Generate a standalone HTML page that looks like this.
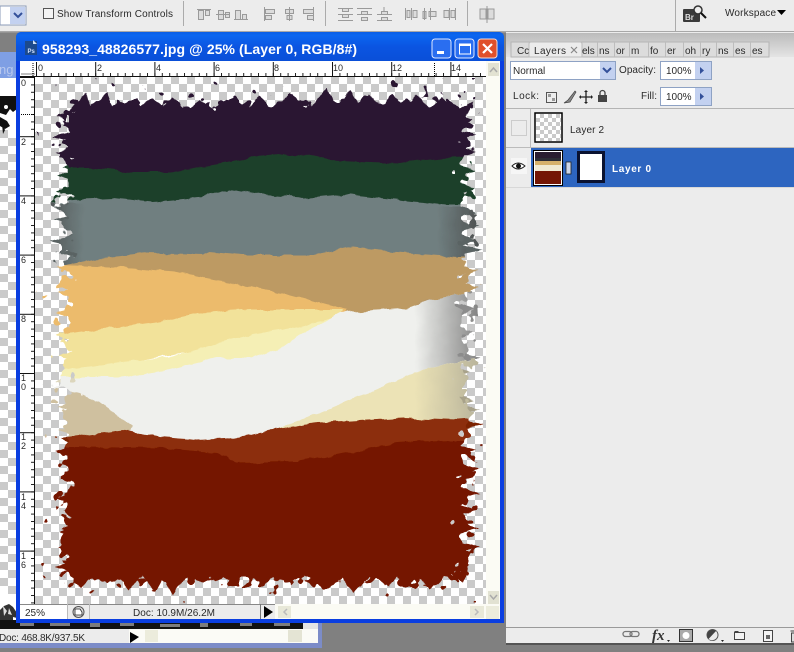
<!DOCTYPE html>
<html><head><meta charset="utf-8"><style>
html,body{margin:0;padding:0;background:#808080;width:794px;height:652px;overflow:hidden}
svg{display:block}
text{font-family:"Liberation Sans",sans-serif;font-size:10px;fill:#2a2a2a}
</style></head><body>
<svg width="794" height="652" viewBox="0 0 794 652" xmlns="http://www.w3.org/2000/svg">
<defs>
<pattern id="chk" x="35" y="68" width="16" height="16" patternUnits="userSpaceOnUse"><rect width="16" height="16" fill="#fff"/><rect x="8" y="8" width="8" height="8" fill="#cacaca"/><rect x="0" y="0" width="8" height="8" fill="#cacaca"/></pattern>
<pattern id="chkS" x="536" y="114" width="8" height="8" patternUnits="userSpaceOnUse"><rect width="8" height="8" fill="#fff"/><rect x="4" y="0" width="4" height="4" fill="#cacaca"/><rect x="0" y="4" width="4" height="4" fill="#cacaca"/></pattern>
<pattern id="tickH" x="36" y="0" width="7.4" height="10" patternUnits="userSpaceOnUse"><rect width="1" height="10" fill="#222"/></pattern>
<pattern id="tickHM" x="36" y="0" width="59.2" height="10" patternUnits="userSpaceOnUse"><rect width="1" height="10" fill="#111"/></pattern>
<pattern id="tickV" x="0" y="77" width="10" height="7.4" patternUnits="userSpaceOnUse"><rect width="10" height="1" fill="#222"/></pattern>
<pattern id="tickVM" x="0" y="77" width="10" height="59.2" patternUnits="userSpaceOnUse"><rect width="10" height="1" fill="#111"/></pattern>
<linearGradient id="title" x1="0" y1="0" x2="0" y2="1"><stop offset="0" stop-color="#0a5ee6"/><stop offset=".12" stop-color="#0b66f0"/><stop offset=".5" stop-color="#0b55e2"/><stop offset="1" stop-color="#0a4fd8"/></linearGradient>
<linearGradient id="tabs" x1="0" y1="0" x2="0" y2="1"><stop offset="0" stop-color="#bdbdbd"/><stop offset="1" stop-color="#e4e4e4"/></linearGradient>
<linearGradient id="fadeL" x1="0" y1="0" x2="1" y2="0"><stop offset="0" stop-color="#444" stop-opacity=".9"/><stop offset="1" stop-color="#444" stop-opacity="0"/></linearGradient>
<linearGradient id="fadeR" x1="0" y1="0" x2="1" y2="0"><stop offset="0" stop-color="#444" stop-opacity="0"/><stop offset="1" stop-color="#444" stop-opacity=".9"/></linearGradient>
<linearGradient id="fadeW" gradientUnits="userSpaceOnUse" x1="415" y1="0" x2="480" y2="0"><stop offset="0" stop-color="#777" stop-opacity="0"/><stop offset="1" stop-color="#777" stop-opacity=".9"/></linearGradient>
<filter id="rag" filterUnits="userSpaceOnUse" x="36" y="78" width="450" height="526" color-interpolation-filters="sRGB">
<feGaussianBlur in="SourceAlpha" stdDeviation="11" result="b"/>
<feTurbulence type="fractalNoise" baseFrequency=".1" numOctaves="2" seed="7" result="n"/>
<feColorMatrix in="n" type="matrix" values="0 0 0 0 0 0 0 0 0 0 0 0 0 0 0 1.5 0 0 0 -0.25" result="na"/>
<feComposite in="b" in2="na" operator="arithmetic" k1="0" k2="1" k3="1" k4="-0.9" result="s"/>
<feComponentTransfer in="s" result="t"><feFuncA type="linear" slope="30" intercept="0"/></feComponentTransfer>
<feFlood flood-color="#fff"/><feComposite in2="t" operator="in"/>
</filter>
<filter id="rag2" filterUnits="userSpaceOnUse" x="36" y="78" width="450" height="526" color-interpolation-filters="sRGB">
<feGaussianBlur in="SourceAlpha" stdDeviation="6" result="b"/>
<feTurbulence type="fractalNoise" baseFrequency=".06" numOctaves="2" seed="3" result="n"/>
<feColorMatrix in="n" type="matrix" values="0 0 0 0 0 0 0 0 0 0 0 0 0 0 0 1 0 0 0 0" result="na"/>
<feComposite in="b" in2="na" operator="arithmetic" k1="0" k2="1" k3="1" k4="-1" result="s"/>
<feComponentTransfer in="s" result="t"><feFuncA type="linear" slope="30" intercept="0"/></feComponentTransfer>
<feFlood flood-color="#fff"/><feComposite in2="t" operator="in"/>
</filter>
<filter id="rough" filterUnits="userSpaceOnUse" x="20" y="60" width="480" height="560"><feTurbulence type="fractalNoise" baseFrequency=".06" numOctaves="3" seed="2"/><feDisplacementMap in="SourceGraphic" scale="6" xChannelSelector="R" yChannelSelector="G"/></filter>
<mask id="artMask" maskUnits="userSpaceOnUse" x="36" y="78" width="450" height="526"><rect x="68" y="106" width="395" height="472" fill="#fff" filter="url(#rag)"/></mask>
</defs>

<!-- workspace -->
<rect width="794" height="652" fill="#808080"/>

<!-- back document -->
<rect x="0" y="52" width="17" height="26" fill="#7f9fe4"/>
<text x="-1" y="74" style="font-size:13px;fill:#b8c8ee">ng</text>
<rect x="0" y="78" width="17" height="552" fill="#fff"/>
<g fill="#cacaca"><rect x="0" y="130" width="8" height="8"/><rect x="8" y="138" width="8" height="8"/><rect x="0" y="146" width="8" height="8"/><rect x="8" y="154" width="8" height="8"/><rect x="0" y="162" width="8" height="8"/><rect x="8" y="170" width="8" height="8"/><rect x="0" y="178" width="8" height="8"/><rect x="8" y="186" width="8" height="8"/><rect x="0" y="194" width="8" height="8"/><rect x="8" y="202" width="8" height="8"/><rect x="0" y="210" width="8" height="8"/><rect x="8" y="218" width="8" height="8"/><rect x="0" y="226" width="8" height="8"/><rect x="8" y="234" width="8" height="8"/><rect x="0" y="242" width="8" height="8"/><rect x="8" y="250" width="8" height="8"/><rect x="0" y="258" width="8" height="8"/><rect x="8" y="266" width="8" height="8"/><rect x="0" y="274" width="8" height="8"/><rect x="8" y="282" width="8" height="8"/><rect x="0" y="290" width="8" height="8"/><rect x="8" y="298" width="8" height="8"/><rect x="0" y="306" width="8" height="8"/><rect x="8" y="314" width="8" height="8"/><rect x="0" y="322" width="8" height="8"/><rect x="8" y="330" width="8" height="8"/><rect x="0" y="338" width="8" height="8"/><rect x="8" y="346" width="8" height="8"/><rect x="0" y="354" width="8" height="8"/><rect x="8" y="362" width="8" height="8"/><rect x="0" y="370" width="8" height="8"/><rect x="8" y="378" width="8" height="8"/><rect x="0" y="386" width="8" height="8"/><rect x="8" y="394" width="8" height="8"/><rect x="0" y="402" width="8" height="8"/><rect x="8" y="410" width="8" height="8"/><rect x="0" y="418" width="8" height="8"/><rect x="8" y="426" width="8" height="8"/><rect x="0" y="434" width="8" height="8"/><rect x="8" y="442" width="8" height="8"/><rect x="0" y="450" width="8" height="8"/><rect x="8" y="458" width="8" height="8"/><rect x="0" y="466" width="8" height="8"/><rect x="8" y="474" width="8" height="8"/><rect x="0" y="482" width="8" height="8"/><rect x="8" y="490" width="8" height="8"/><rect x="0" y="498" width="8" height="8"/><rect x="8" y="506" width="8" height="8"/><rect x="0" y="514" width="8" height="8"/><rect x="8" y="522" width="8" height="8"/><rect x="0" y="530" width="8" height="8"/><rect x="8" y="538" width="8" height="8"/><rect x="0" y="546" width="8" height="8"/><rect x="8" y="554" width="8" height="8"/><rect x="0" y="562" width="8" height="8"/><rect x="8" y="570" width="8" height="8"/><rect x="0" y="578" width="8" height="8"/><rect x="8" y="586" width="8" height="8"/></g>
<path d="M0 96h17v13l-4 3-3-3-4 6-6-2zM0 117l7 4 3 5-5 3-5-3zM2 124l3 6-2 4z" fill="#111"/>
<circle cx="6" cy="107" r="2" fill="#fff"/>
<path d="M0 610l4-4 5-2 4 3 4 6v7H0z" fill="#333"/><path d="M3 606l4 5-3 5zM9 608l3 7-4-1z" fill="#ddd"/><path d="M13 617l4 1v4h-4z" fill="#fff"/>
<rect x="0" y="620" width="303" height="9" fill="#111"/>
<path d="M20 622h14v4H20zM50 623h20v3H50zM90 622h10v5H90zM120 623h14v3h-14zM160 624h20v3h-20zM200 623h8v4h-8zM240 622h12v4h-12zM274 623h16v3h-16z" fill="#7c7c7c"/>
<rect x="303" y="620" width="15" height="9" fill="#e4e4e4"/>
<rect x="0" y="629" width="318" height="14" fill="#fbfbf6"/>
<rect x="0" y="629" width="129" height="14" fill="#ececec"/>
<text x="-1" y="641" textLength="86">Doc: 468.8K/937.5K</text>
<path d="M130 632l9 5-9 6z" fill="#000"/>
<rect x="145" y="630" width="13" height="12" fill="#ececdc"/><rect x="288" y="630" width="14" height="12" fill="#e4e4d4"/>
<rect x="0" y="643" width="322" height="5" fill="#7c8cc8"/><rect x="318" y="620" width="4" height="28" fill="#7c8cc8"/>

<!-- toolbar -->
<rect x="0" y="0" width="794" height="32" fill="#ececec"/>
<rect x="0" y="31" width="794" height="1.5" fill="#a8a8a8"/>
<rect x="0" y="6" width="26" height="19" fill="#fff" stroke="#8b9bb8"/>
<rect x="10" y="7" width="15" height="17" fill="#c3d1f0"/>
<path d="M14 13l4 4 4-4" fill="none" stroke="#33509a" stroke-width="2"/>
<rect x="43.500" y="8.500" width="10" height="10" fill="#f4f4f4" stroke="#555"/>
<text x="57" y="17" textLength="116">Show Transform Controls</text>
<g fill="#ababab"><rect x="183" y="1" width="1" height="25"/><rect x="325" y="1" width="1" height="25"/><rect x="467" y="1" width="1" height="25"/><rect x="675" y="0" width="1" height="31"/></g>
<g fill="#dcdcdc" stroke="#9a9a9a" stroke-width="1">
<path d="M197 9.500h14M198.500 10.500h5v9h-5zM205.500 10.500h4v5h-4z"/>
<path d="M216 14.500h14M218.500 10.500h5v9h-5zM225.500 12.500h4v5h-4z"/>
<path d="M234 19.500h14M235.500 10.500h5v9h-5zM242.500 14.500h4v5h-4z"/>
<path d="M264.500 7v14M265.500 9.500h9v4h-9zM265.500 15.500h6v4h-6z"/>
<path d="M289.500 7v14M285.500 9.500h8v4h-8zM287 15.500h5v4h-5z"/>
<path d="M313.500 7v14M303.500 9.500h10v4h-10zM307.500 15.500h6v4h-6z"/>
<path d="M338 8.500h15M338 14.500h15M342.500 8.500h6v3h-6zM342.500 14.500h6v3h-6zM338 20.500h15"/>
<path d="M357 8.500h15M357 14.500h15M361.500 11.500h6v3h-6zM361.500 17.500h6v3h-6z"/>
<path d="M377 14.500h15M377 20.500h15M381.500 11.500h6v3h-6zM381.500 17.500h6v3h-6zM384 7v4"/>
<path d="M405.500 8v12M411.500 8v12M407 10.500h3v7h-3zM413 10.500h4v7h-4z"/>
<path d="M424.500 8v12M430.500 8v12M423 11.500h3v7h-3zM429 11.500h7v5h-7z"/>
<path d="M449.500 8v12M455.500 8v12M444 10.500h5v7h-5zM451 10.500h4v7h-4z"/>
<path d="M480 9h6v10h-6zM488 9h6v10h-6zM487 6v17"/>
</g>
<!-- bridge -->
<rect x="683" y="9" width="17" height="13" rx="1" fill="#3a3a3a"/>
<text x="685" y="20" style="font-size:8px;font-weight:bold;fill:#ddd">Br</text>
<circle cx="698" cy="10" r="4" fill="#eee" stroke="#333" stroke-width="1.500"/>
<path d="M701 13l5 5" stroke="#111" stroke-width="2"/>
<text x="725" y="16" textLength="51">Workspace</text>
<path d="M777 10h9l-4.500 5z" fill="#000"/>

<!-- main doc window -->
<path d="M16 623V38q0-6 6-6h476q6 0 6 6v585z" fill="#0a3ee0"/>
<path d="M16 61V38q0-6 6-6h476q6 0 6 6v23z" fill="url(#title)"/>
<rect x="25" y="41" width="12" height="14" fill="#1d4a8c"/><path d="M33 40l4 4h-4z" fill="#cfe0f8"/>
<text x="27.500" y="53" style="font-size:6px;font-weight:bold;fill:#cfe0ff">Ps</text>
<text x="42" y="54" textLength="315" style="font-size:14px;font-weight:bold;fill:#fff">958293_48826577.jpg @ 25% (Layer 0, RGB/8#)</text>
<!-- buttons -->
<rect x="432" y="39" width="19" height="19" rx="3" fill="#2a6ef0" stroke="#dfe8ff"/><rect x="437" y="51" width="7" height="3" fill="#fff"/>
<rect x="455" y="39" width="19" height="19" rx="3" fill="#2a6ef0" stroke="#dfe8ff"/><rect x="459.500" y="44" width="11" height="10" fill="none" stroke="#fff"/><rect x="459.500" y="44" width="11" height="2" fill="#fff"/>
<rect x="478" y="39" width="19" height="19" rx="3" fill="#e0502a" stroke="#f4dcd2"/><path d="M483 44l9 9M492 44l-9 9" stroke="#fff" stroke-width="2.200"/>
<!-- content -->
<rect x="20" y="61" width="480" height="558" fill="#fff"/>
<rect x="35" y="77" width="451" height="527" fill="url(#chk)"/>

<!-- ruler H -->
<rect x="20" y="61.500" width="466" height="15" fill="#fff"/>
<rect x="36" y="73" width="450" height="3" fill="url(#tickH)"/>
<rect x="36" y="62" width="450" height="14" fill="url(#tickHM)"/>
<rect x="20" y="76" width="466" height="1" fill="#111"/>
<path d="M21.500 74h13M33 63v13" stroke="#000" stroke-width="1" stroke-dasharray="1 1" fill="none"/>
<g><text x="38" y="71" style="font-size:9px">0</text><text x="97" y="71" style="font-size:9px">2</text><text x="156" y="71" style="font-size:9px">4</text><text x="215" y="71" style="font-size:9px">6</text><text x="274" y="71" style="font-size:9px">8</text><text x="333" y="71" style="font-size:9px">10</text><text x="392" y="71" style="font-size:9px">12</text><text x="451" y="71" style="font-size:9px">14</text></g>
<path d="M434.500 63v13" stroke="#000" stroke-dasharray="1 1"/>
<!-- ruler V -->
<rect x="20" y="77" width="15" height="527" fill="#fff"/>
<rect x="31" y="77" width="3" height="527" fill="url(#tickV)"/>
<rect x="20" y="77" width="14" height="527" fill="url(#tickVM)"/>
<rect x="34" y="77" width="1" height="527" fill="#111"/>
<path d="M21 114.500h13" stroke="#000" stroke-dasharray="1 1"/>
<g><text x="21" y="86" style="font-size:9px">0</text><text x="21" y="145" style="font-size:9px">2</text><text x="21" y="204" style="font-size:9px">4</text><text x="21" y="263" style="font-size:9px">6</text><text x="21" y="322" style="font-size:9px">8</text><text x="21" y="381" style="font-size:9px">1</text><text x="21" y="390" style="font-size:9px">0</text><text x="21" y="440" style="font-size:9px">1</text><text x="21" y="449" style="font-size:9px">2</text><text x="21" y="500" style="font-size:9px">1</text><text x="21" y="509" style="font-size:9px">4</text><text x="21" y="559" style="font-size:9px">1</text><text x="21" y="568" style="font-size:9px">6</text></g>

<!-- art -->
<rect x="84" y="118" width="362" height="450" fill="#fff" filter="url(#rag2)"/>
<!-- hand placed torn spikes -->
<g filter="url(#rough)">
<path fill="#2b1830" d="M62 125L72 108L85 92L93 108L108 93L114 108L120 102L135 110L153 97L163 108L173 98L186 110L200 100L215 110L233 97L246 108L260 97L275 110L290 93L308 110L327 89L338 108L350 91L360 108L370 94L382 108L393 95L405 108L417 95L430 108L443 98L456 110L472 101L462 125ZM78 110L55 117L78 124ZM78 130L53 137L78 144ZM78 145L55 152L78 159ZM454 113L473 120L454 127ZM454 128L475 135L454 142ZM454 145L477 152L454 159Z"/>
<path fill="#1f3f2b" d="M80 160L63 167L80 174ZM80 170L57 177L80 184ZM80 183L56 190L80 197ZM454 163L475 170L454 177ZM454 181L476 188L454 195Z"/>
<path fill="#5a6464" d="M80 200L52 207L80 214ZM80 213L53 220L80 227ZM80 233L50 240L80 247ZM80 246L60 253L80 260ZM454 205L477 212L454 219ZM454 219L480 226L454 233ZM454 233L477 240L454 247ZM454 243L483 250L454 257Z"/>
<path fill="#bd9a64" d="M454 263L478 270L454 277ZM454 280L480 287L454 294Z"/>
<path fill="#ecbb6c" d="M80 261L57 268L80 275ZM80 285L57 292L80 299ZM80 306L55 313L80 320Z"/>
<path fill="#f2e29a" d="M80 328L55 335L80 342ZM80 348L58 355L80 362Z"/>
<path fill="#dcd6bc" d="M80 375L55 382L80 389Z"/>
<path fill="#cfc09f" d="M80 400L57 407L80 414ZM80 423L58 430L80 437Z"/>
<path fill="#8c8c8c" d="M454 303L476 310L454 317ZM454 326L473 333L454 340ZM454 350L480 357L454 364Z"/>
<path fill="#a8a28a" d="M454 366L470 373L454 380ZM454 393L473 400L454 407ZM454 402L480 408L454 415Z"/>
<path fill="#7c2006" d="M454 418L482 425L454 432ZM80 433L60 440L80 447Z"/>
<path fill="#741604" d="M62 560L70 572L82 587L95 574L107 583L118 574L130 590L142 575L155 592L163 577L173 595L188 574L203 583L216 572L230 580L246 574L263 583L275 574L287 583L305 574L323 587L340 575L355 593L372 574L390 588L398 575L407 587L418 575L430 590L448 572L463 582L470 560ZM80 445L55 452L80 459ZM80 470L58 477L80 484ZM80 491L55 498L80 505ZM80 503L63 510L80 517ZM80 521L62 528L80 535ZM80 540L57 547L80 554ZM80 560L55 567L80 574ZM454 443L477 450L454 457ZM454 463L480 470L454 477ZM454 486L480 493L454 500ZM454 503L476 510L454 517ZM454 521L480 528L454 535ZM454 540L480 547L454 554ZM454 558L470 565L454 572Z"/>
</g>
<g mask="url(#artMask)"><g filter="url(#rough)">
<rect x="36" y="78" width="450" height="120" fill="#2b1830"/>
<polygon points="36,168 90,168 130,172 170,172 210,165 250,158 297,154 330,160 370,162 400,163 440,159 486,157 486,210 36,210" fill="#1f3f2b"/>
<polygon points="36,204 73,200 113,198 153,202 203,197 230,189 263,195 303,198 347,194 380,198 447,205 486,205 486,270 36,270" fill="#707f80"/>
<rect x="36" y="203" width="48" height="62" fill="url(#fadeL)"/><rect x="438" y="207" width="48" height="50" fill="url(#fadeR)"/>
<polygon points="36,268 60,266 103,258 147,253 203,255 210,252 243,255 313,255 353,247 397,252 457,257 486,257 486,320 36,320" fill="#bd9a64"/>
<polygon points="36,266 60,265 133,268 173,272 250,287 283,293 347,310 343,320 36,340" fill="#ecbb6c"/>
<polygon points="36,336 70,333 117,327 167,320 200,313 250,310 343,310 340,316 300,327 250,340 36,380" fill="#f2e29a"/>
<polygon points="36,372 77,368 167,357 250,335 300,326 330,318 300,340 250,365 150,375 36,385" fill="#f5efb5"/>
<polygon points="36,378 67,377 117,377 167,370 217,358 250,358 283,347 307,330 340,313 383,310 407,308 433,300 457,295 486,285 486,440 36,440" fill="#eff0ed"/>
<polygon points="415,303 433,300 457,295 486,285 486,355 463,360 423,370 415,373" fill="url(#fadeW)"/>
<polygon points="36,385 67,390 100,403 133,427 123,436 36,445" fill="#cfc09f"/>
<polygon points="270,433 317,413 367,393 423,370 463,360 486,355 486,430 270,440" fill="#ece3b6"/>
<polygon points="415,375 423,370 463,360 486,355 486,425 415,425" fill="url(#fadeW)" opacity=".5"/>
<polygon points="36,438 63,438 123,430 160,437 197,440 233,438 263,432 317,423 403,418 457,420 486,418 486,604 36,604" fill="#8c2e08"/>
<polygon points="36,447 80,447 163,448 217,453 237,463 297,462 347,453 397,443 450,440 486,440 486,604 36,604" fill="#741604"/>
</g></g>

<!-- scrollbars -->
<rect x="486" y="61" width="14" height="543" fill="#fbfbf4"/>
<rect x="488" y="63" width="11" height="13" fill="#e2e2d2"/><path d="M490 72l3.500-4 3.500 4" fill="none" stroke="#aaa" stroke-width="1.500"/>
<rect x="488" y="591" width="11" height="13" fill="#e2e2d2"/><path d="M490 595l3.500 4 3.500-4" fill="none" stroke="#aaa" stroke-width="1.500"/>
<rect x="20" y="604" width="480" height="15" fill="#fbfbf4"/>
<rect x="20" y="604" width="47" height="15" fill="#fff"/>
<rect x="67" y="604" width="208" height="15" fill="#ececec"/>
<rect x="20" y="604" width="255" height="1" fill="#888"/>
<rect x="67" y="604" width="1" height="15" fill="#bbb"/><rect x="89" y="604" width="1" height="15" fill="#bbb"/><rect x="260" y="604" width="1" height="15" fill="#777"/>
<text x="25" y="616">25%</text>
<circle cx="78.500" cy="612" r="5.500" fill="#ddd" stroke="#555"/><path d="M75 609h5l2 3v3h-7z" fill="#fff" stroke="#222" stroke-width=".8"/>
<text x="133" y="616" textLength="82">Doc: 10.9M/26.2M</text>
<path d="M264 606l9 6-9 6z" fill="#000"/>
<rect x="278" y="606" width="13" height="12" fill="#e8e8d8"/><path d="M287 609l-3 3 3 3" fill="none" stroke="#bbb" stroke-width="1.500"/>
<rect x="470" y="606" width="14" height="12" fill="#e8e8d8"/><path d="M475 609l3 3-3 3" fill="none" stroke="#bbb" stroke-width="1.500"/>
<rect x="486" y="606" width="13" height="13" fill="#ececdc"/>

<!-- panel -->
<rect x="506" y="33" width="288" height="612" fill="#555"/>
<rect x="506" y="32" width="288" height="611" fill="#ececec"/>
<rect x="506" y="33" width="288" height="1" fill="#bbb"/>
<rect x="506" y="34" width="288" height="23" fill="url(#tabs)"/>
<rect x="511" y="42" width="258" height="15" fill="#dcdcdc" stroke="#b4b4b4"/>
<g fill="#bdbdbd"><rect x="580" y="42" width="1" height="15"/><rect x="597" y="42" width="1" height="15"/><rect x="614" y="42" width="1" height="15"/><rect x="629" y="42" width="1" height="15"/><rect x="648" y="42" width="1" height="15"/><rect x="665" y="42" width="1" height="15"/><rect x="683" y="42" width="1" height="15"/><rect x="700" y="42" width="1" height="15"/><rect x="716" y="42" width="1" height="15"/><rect x="733" y="42" width="1" height="15"/><rect x="750" y="42" width="1" height="15"/></g>
<text x="517" y="54">Cc</text><text x="582" y="54">els</text><text x="599" y="54">ns</text><text x="616" y="54">or</text><text x="631" y="54">m</text><text x="650" y="54">fo</text><text x="667" y="54">er</text><text x="685" y="54">oh</text><text x="702" y="54">ry</text><text x="718" y="54">ns</text><text x="735" y="54">es</text><text x="752" y="54">es</text>
<path d="M529 57V44q0-2 2-2h49q2 0 2 2v13z" fill="#ececec" stroke="#bbb"/>
<text x="534" y="54" textLength="32">Layers</text>
<path d="M571 47l6 6M577 47l-6 6" stroke="#888" stroke-width="1.200"/>
<!-- blend -->
<rect x="510.500" y="61.500" width="105" height="18" fill="#fff" stroke="#8ea2c4"/>
<rect x="600" y="62" width="15" height="17" fill="#c3d1f0"/>
<path d="M603 68l4 4 4-4" fill="none" stroke="#33509a" stroke-width="2"/>
<text x="513" y="74">Normal</text>
<text x="619" y="73" textLength="37">Opacity:</text>
<rect x="660.500" y="61.500" width="51" height="18" fill="#fff" stroke="#8ea2c4"/>
<rect x="695" y="62" width="16" height="17" fill="#c3d1f0"/><path d="M700 67l4 3.500-4 3.500z" fill="#33509a"/>
<text x="666" y="74">100%</text>
<!-- lock -->
<text x="513" y="99" textLength="26">Lock:</text>
<rect x="546.500" y="92.500" width="10" height="10" fill="#eee" stroke="#555"/><rect x="548" y="94" width="3" height="3" fill="#999"/><rect x="552" y="98" width="3" height="3" fill="#999"/>
<path d="M564 103l4-3 7-9 1 1-6 10z" fill="#888" stroke="#444" stroke-width=".7"/>
<path d="M586 91v12M580 97h12" stroke="#222" stroke-width="1.300"/><path d="M586 90l-2 2h4zM586 104l-2-2h4zM579 97l2-2v4zM593 97l-2-2v4z" fill="#222"/>
<rect x="598" y="95" width="9" height="7" fill="#444"/><path d="M600 95v-2a2.500 2.500 0 0 1 5 0v2" fill="none" stroke="#444" stroke-width="1.300"/>
<text x="641" y="99" textLength="16">Fill:</text>
<rect x="660.500" y="87.500" width="51" height="18" fill="#fff" stroke="#8ea2c4"/>
<rect x="695" y="88" width="16" height="17" fill="#c3d1f0"/><path d="M700 93l4 3.500-4 3.500z" fill="#33509a"/>
<text x="666" y="100">100%</text>
<rect x="506" y="108" width="288" height="1" fill="#b4b4b4"/>
<!-- layers -->
<rect x="530" y="109" width="1" height="38" fill="#bbb"/>
<rect x="511.500" y="120.500" width="15" height="15" fill="#ececec" stroke="#ccc"/>
<rect x="535" y="113" width="27" height="29" fill="#fff" stroke="#000" stroke-width="1.500"/>
<rect x="536" y="114" width="25" height="27" fill="url(#chkS)"/>
<text x="570" y="133" textLength="34">Layer 2</text>
<rect x="506" y="147" width="288" height="1" fill="#bbb"/>
<rect x="531" y="148" width="263" height="39" fill="#2d65c0"/>
<rect x="506" y="187" width="288" height="1" fill="#d8d8d8"/>
<rect x="511" y="158" width="16" height="16" fill="#f6f6f6"/>
<path d="M512 166q6-6 13 0q-7 6-13 0z" fill="#fff" stroke="#222"/><circle cx="518.500" cy="166" r="2.500" fill="#111"/>
<rect x="533" y="150" width="30" height="36" fill="#000"/>
<rect x="534" y="151" width="28" height="34" fill="#fff"/>
<rect x="535" y="152" width="26" height="9" fill="#2a1d30"/><rect x="535" y="158" width="26" height="6" fill="#2c2c34"/><rect x="535" y="161" width="26" height="5" fill="#d6b16a"/><rect x="535" y="165" width="26" height="6" fill="#f0ead2"/><rect x="535" y="171" width="26" height="13" fill="#741604"/>
<rect x="566" y="162" width="5" height="12" fill="#cdd6e8" stroke="#222" stroke-width=".8"/>
<rect x="577" y="151" width="28" height="32" fill="#0a1230"/>
<rect x="580" y="154" width="22" height="26" fill="#fff"/>
<text x="612" y="172" textLength="39" style="font-weight:bold;fill:#fff">Layer 0</text>
<!-- panel footer -->
<rect x="506" y="627" width="288" height="1" fill="#9a9a9a"/>
<g fill="none" stroke="#777" stroke-width="1.300"><rect x="623" y="631.500" width="9" height="5" rx="2.500"/><rect x="630" y="631.500" width="9" height="5" rx="2.500"/></g>
<text x="652" y="640" style="font-family:'Liberation Serif',serif;font-size:15px;font-style:italic;font-weight:bold;fill:#333">fx</text>
<path d="M667 640l3 0-1.500 2z" fill="#222"/>
<rect x="679.500" y="629.500" width="13" height="12" fill="#aaa" stroke="#333"/><circle cx="686" cy="635.500" r="3.500" fill="#fff"/>
<circle cx="712.500" cy="635" r="5.500" fill="#ddd" stroke="#555"/><path d="M716 631a5.500 5.500 0 0 1-7.500 8z" fill="#ececec"/><path d="M708.500 639a5.500 5.500 0 0 1 7.500-8z" fill="#444"/>
<path d="M721 640l3 0-1.500 2z" fill="#222"/>
<path d="M734.500 632.500h10v7h-10z" fill="#f4f4f4" stroke="#444"/><path d="M734.500 631.500h4" stroke="#444"/>
<rect x="763.500" y="630.500" width="9" height="11" fill="#f4f4f4" stroke="#444"/><rect x="766" y="635" width="4" height="4" fill="#666"/>
<path d="M790.500 631h4M791.500 633h3v9h-3z" fill="#ddd" stroke="#444"/>
</svg>
</body></html>
